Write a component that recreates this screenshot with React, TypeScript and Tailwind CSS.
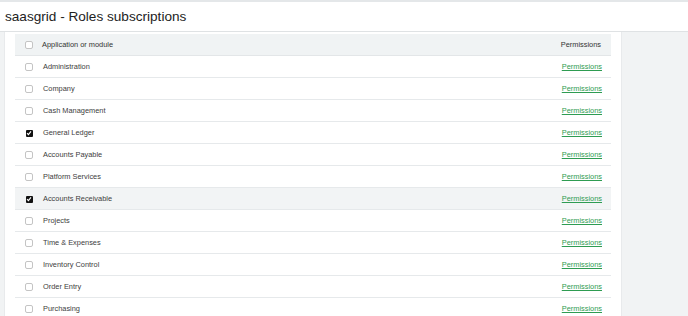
import React from 'react';

const modules = [
  { name: 'Administration', checked: false },
  { name: 'Company', checked: false },
  { name: 'Cash Management', checked: false },
  { name: 'General Ledger', checked: true },
  { name: 'Accounts Payable', checked: false },
  { name: 'Platform Services', checked: false },
  { name: 'Accounts Receivable', checked: true, hover: true },
  { name: 'Projects', checked: false },
  { name: 'Time & Expenses', checked: false },
  { name: 'Inventory Control', checked: false },
  { name: 'Order Entry', checked: false },
  { name: 'Purchasing', checked: false },
];

function Checkbox({ checked }: { checked: boolean }) {
  if (checked) {
    return (
      <span className="flex h-[7px] w-[7px] items-center justify-center rounded-[1px] bg-[#111]">
        <svg width="6" height="6" viewBox="0 0 6 6">
          <path d="M1 3.2 L2.4 4.6 L5 1.4" stroke="#fff" strokeWidth="1.1" fill="none" />
        </svg>
      </span>
    );
  }
  return <span className="block h-[8px] w-[8px] rounded-[2px] border border-[#c4c4c4] bg-white" />;
}

export default function App() {
  return (
    <div
      className="h-[316px] w-[688px] overflow-hidden bg-[#f1f3f4] text-[#444]"
      style={{ fontFamily: '"Liberation Sans", Arial, sans-serif' }}
    >
      <header className="h-[32px] border-t-2 border-b border-t-[#e4e7e9] border-b-[#dfe2e4] bg-white pl-[5px]">
        <h1 className="pt-[7px] text-[13.6px] leading-[16px] text-[#222]">saasgrid - Roles subscriptions</h1>
      </header>

      <div className="flex">
        <div className="w-[4px] shrink-0" />
        <div className="w-[618px] shrink-0 border-l border-r border-[#e8eaec] bg-white px-[10px] pt-[2px]">
          <div className="flex h-[22px] items-center border-b border-[#e3e6e8] bg-[#f0f3f4] pt-[1px] text-[7.4px]">
            <div className="flex w-[27px] justify-center pl-[1px]">
              <Checkbox checked={false} />
            </div>
            <div className="flex-1 text-[#333]">Application or module</div>
            <div className="pr-[10px] text-[#333]">Permissions</div>
          </div>
          {modules.map((m) => (
            <div
              key={m.name}
              className={
                m.hover
                  ? 'flex h-[22px] items-center border-b border-[#e6e9eb] bg-[#f2f4f5] pt-[1px] text-[7.4px]'
                  : 'flex h-[22px] items-center border-b border-[#e6e9eb] pt-[1px] text-[7.4px]'
              }
            >
              <div className="flex w-[27px] justify-center pl-[1px]">
                <Checkbox checked={m.checked} />
              </div>
              <div className="flex-1 pl-[1px] text-[#3d3d3d]">{m.name}</div>
              <a className="pr-[9px] text-[#2e9c52] underline underline-offset-[1px]">Permissions</a>
            </div>
          ))}
        </div>
        <div className="flex-1" />
      </div>
    </div>
  );
}
